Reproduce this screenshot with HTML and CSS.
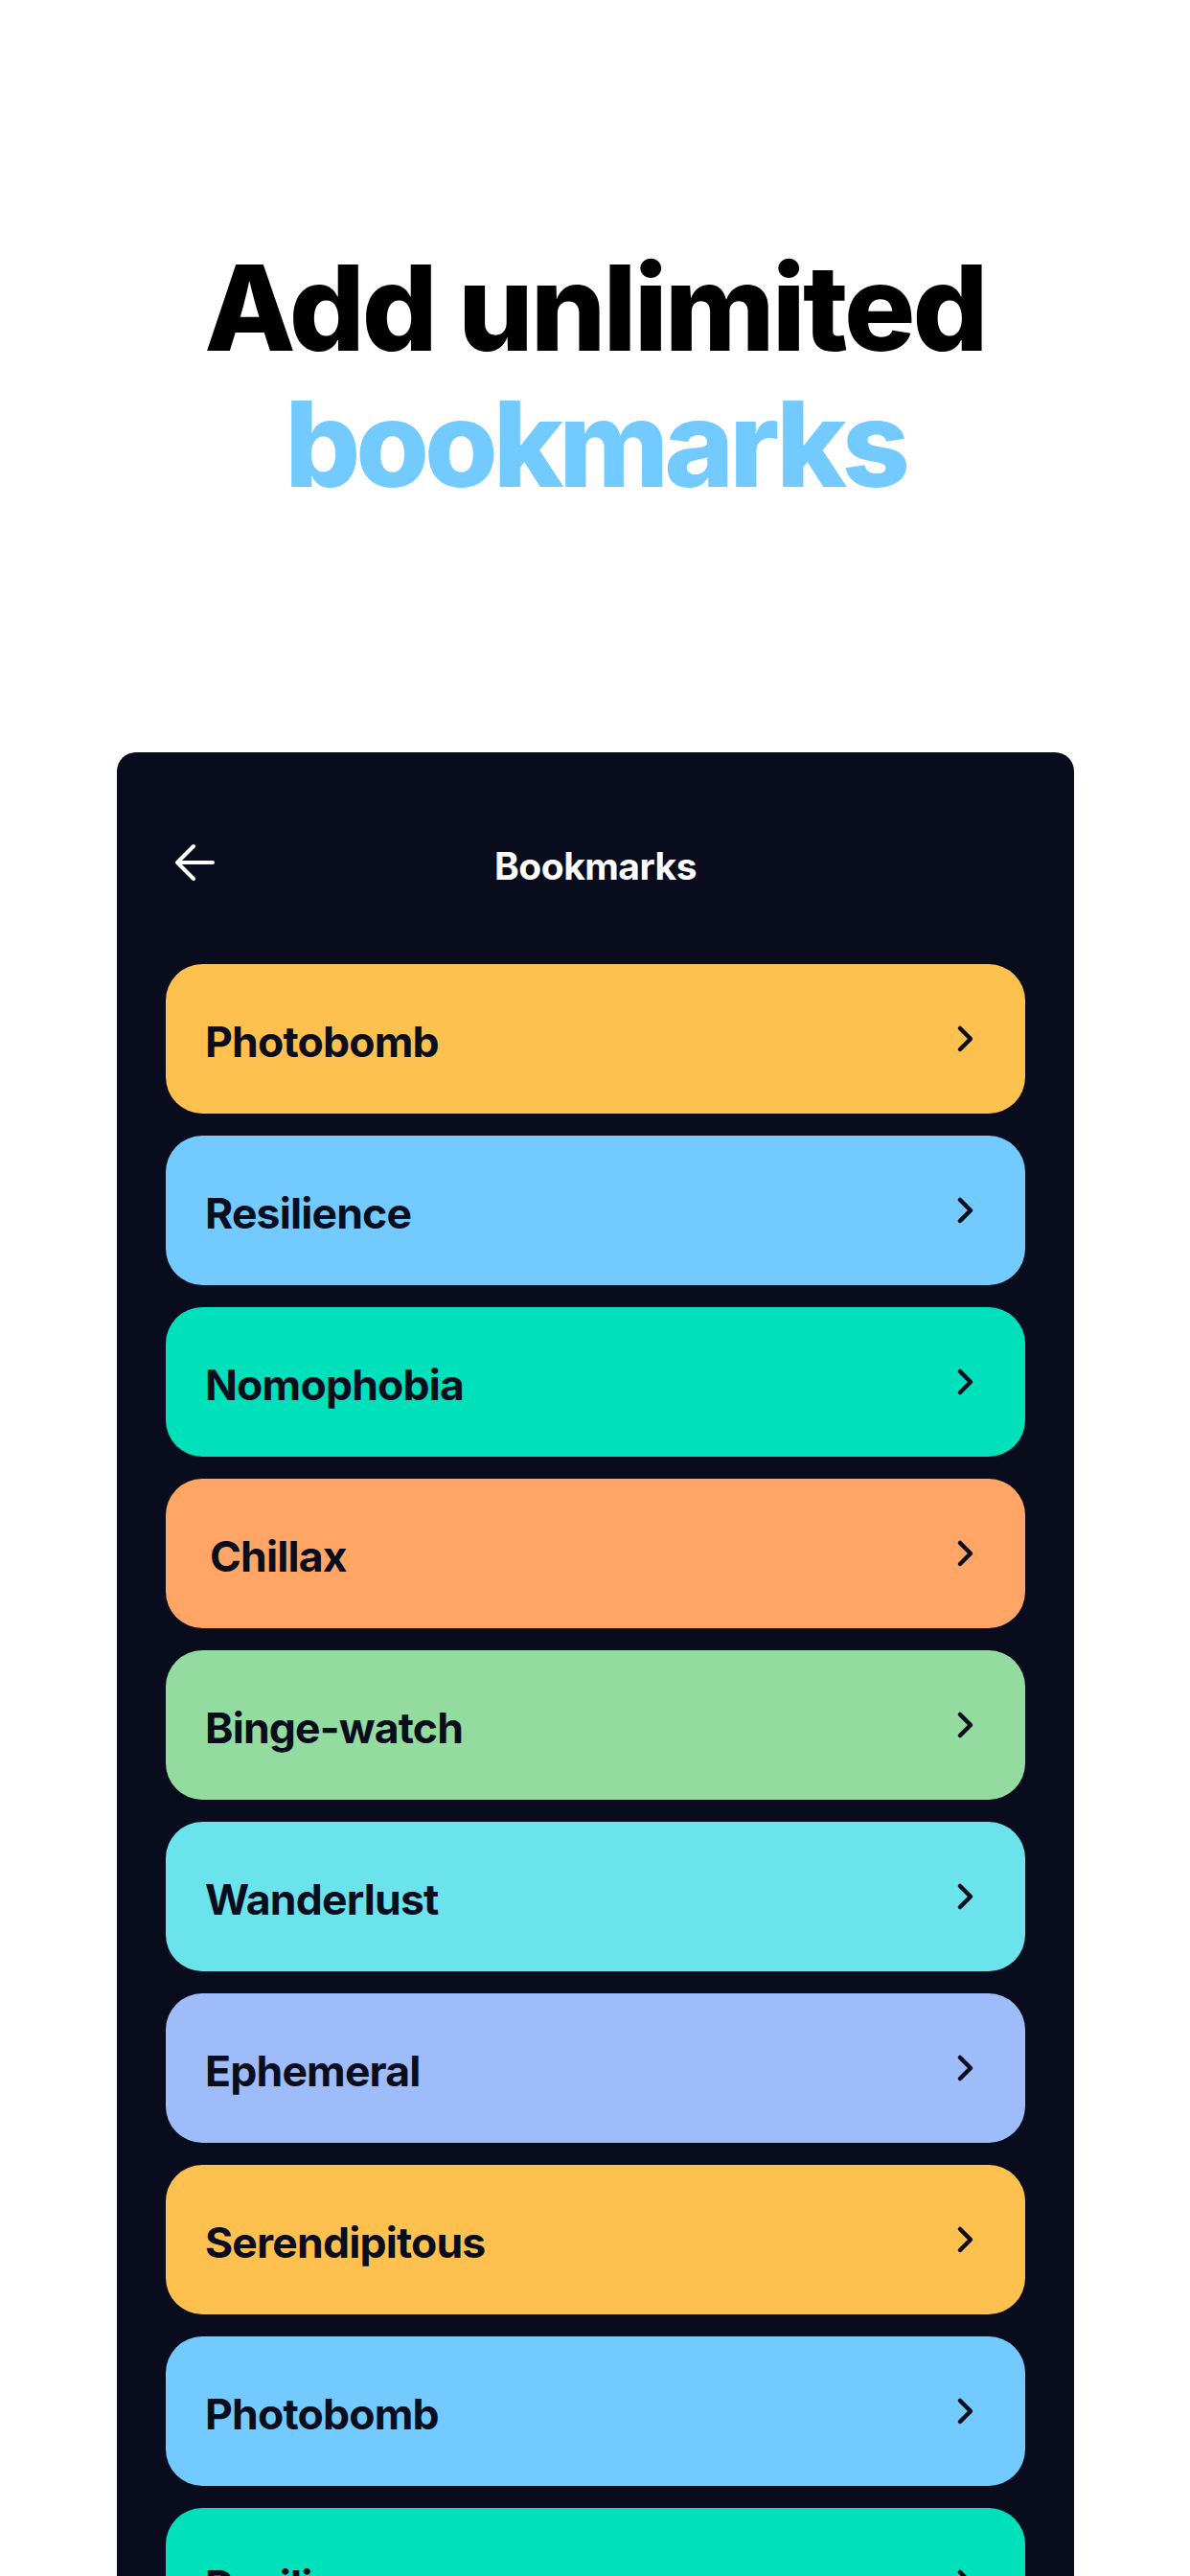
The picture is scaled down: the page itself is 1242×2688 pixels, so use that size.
FILE: index.html
```html
<!DOCTYPE html>
<html lang="en">
<head>
<meta charset="utf-8">
<title>Bookmarks</title>
<link rel="stylesheet" href="styles.css">
</head>
<body>
  <header class="hero">
    <h1 class="hero-title">
      <span class="hero-line">Add unlimited</span>
      <span class="hero-line hero-accent">bookmarks</span>
    </h1>
  </header>

  <section class="phone">
    <div class="topbar">
      <button class="back" aria-label="Back">
        <svg viewBox="0 0 44 40" width="44" height="40">
          <path d="M41 20H5M21 3L4 20l17 17" fill="none" stroke="#fff" stroke-width="4" stroke-linecap="round" stroke-linejoin="round"/>
        </svg>
      </button>
      <div class="topbar-title">Bookmarks</div>
      <div></div>
    </div>

    <ul class="list">
      <li class="item yellow"><span class="label">Photobomb</span><svg class="chev" viewBox="0 0 20 30" width="20" height="30"><path d="M4 4l11 11L4 26" fill="none" stroke="#0a0e1c" stroke-width="4.5" stroke-linecap="round" stroke-linejoin="round"/></svg></li>
      <li class="item blue"><span class="label">Resilience</span><svg class="chev" viewBox="0 0 20 30" width="20" height="30"><path d="M4 4l11 11L4 26" fill="none" stroke="#0a0e1c" stroke-width="4.5" stroke-linecap="round" stroke-linejoin="round"/></svg></li>
      <li class="item teal"><span class="label">Nomophobia</span><svg class="chev" viewBox="0 0 20 30" width="20" height="30"><path d="M4 4l11 11L4 26" fill="none" stroke="#0a0e1c" stroke-width="4.5" stroke-linecap="round" stroke-linejoin="round"/></svg></li>
      <li class="item orange"><span class="label nudge">Chillax</span><svg class="chev" viewBox="0 0 20 30" width="20" height="30"><path d="M4 4l11 11L4 26" fill="none" stroke="#0a0e1c" stroke-width="4.5" stroke-linecap="round" stroke-linejoin="round"/></svg></li>
      <li class="item green"><span class="label">Binge-watch</span><svg class="chev" viewBox="0 0 20 30" width="20" height="30"><path d="M4 4l11 11L4 26" fill="none" stroke="#0a0e1c" stroke-width="4.5" stroke-linecap="round" stroke-linejoin="round"/></svg></li>
      <li class="item cyan"><span class="label">Wanderlust</span><svg class="chev" viewBox="0 0 20 30" width="20" height="30"><path d="M4 4l11 11L4 26" fill="none" stroke="#0a0e1c" stroke-width="4.5" stroke-linecap="round" stroke-linejoin="round"/></svg></li>
      <li class="item periwinkle"><span class="label">Ephemeral</span><svg class="chev" viewBox="0 0 20 30" width="20" height="30"><path d="M4 4l11 11L4 26" fill="none" stroke="#0a0e1c" stroke-width="4.5" stroke-linecap="round" stroke-linejoin="round"/></svg></li>
      <li class="item yellow"><span class="label">Serendipitous</span><svg class="chev" viewBox="0 0 20 30" width="20" height="30"><path d="M4 4l11 11L4 26" fill="none" stroke="#0a0e1c" stroke-width="4.5" stroke-linecap="round" stroke-linejoin="round"/></svg></li>
      <li class="item blue"><span class="label">Photobomb</span><svg class="chev" viewBox="0 0 20 30" width="20" height="30"><path d="M4 4l11 11L4 26" fill="none" stroke="#0a0e1c" stroke-width="4.5" stroke-linecap="round" stroke-linejoin="round"/></svg></li>
      <li class="item teal"><span class="label">Resilience</span><svg class="chev" viewBox="0 0 20 30" width="20" height="30"><path d="M4 4l11 11L4 26" fill="none" stroke="#0a0e1c" stroke-width="4.5" stroke-linecap="round" stroke-linejoin="round"/></svg></li>
    </ul>
  </section>
</body>
</html>
```

FILE: styles.css
```css
* { box-sizing: border-box; }

html, body {
  margin: 0;
  padding: 0;
  background: #ffffff;
  width: 1242px;
  height: 2688px;
  overflow: hidden;
  font-family: "Inter", "Liberation Sans", sans-serif;
}

/* Headline */
.hero {
  padding-top: 250px;
  height: 785px;
}

.hero-title {
  margin: 0;
  display: flex;
  flex-direction: column;
  align-items: center;
  font-size: 124px;
  font-weight: 800;
  line-height: 142px;
  letter-spacing: -3px;
  color: #000000;
}

.hero-accent {
  color: #72cafe;
  letter-spacing: -5px;
}

/* Dark phone panel */
.phone {
  margin-left: 122px;
  width: 999px;
  min-height: 1903px;
  background: #080c1c;
  border-radius: 20px 20px 0 0;
  padding: 50px 51px 0;
}

.topbar {
  height: 130px;
  display: grid;
  grid-template-columns: 1fr auto 1fr;
  align-items: center;
}

.back {
  justify-self: start;
  margin-left: 8px;
  padding: 0;
  border: 0;
  background: none;
  display: flex;
}

.topbar-title {
  color: #ffffff;
  font-size: 39px;
  font-weight: 700;
  letter-spacing: -0.5px;
  padding-top: 6px;
}

.list {
  list-style: none;
  margin: 41px 0 0;
  padding: 0;
  display: flex;
  flex-direction: column;
  gap: 23px;
}

.item {
  height: 156px;
  border-radius: 38px;
  display: flex;
  align-items: center;
  justify-content: space-between;
  padding: 6px 52px 0 41px;
}

.label {
  font-size: 44.5px;
  font-weight: 700;
  letter-spacing: -0.8px;
  color: #0a0e1c;
}

.label.nudge { margin-left: 5px; }

.chev { margin-top: -7px; }

.yellow { background: #fec14f; }
.blue { background: #72cafe; }
.teal { background: #00e0ba; }
.orange { background: #ffa666; }
.green { background: #94dba0; }
.cyan { background: #6ae3ec; }
.periwinkle { background: #9ebbfa; }
```
